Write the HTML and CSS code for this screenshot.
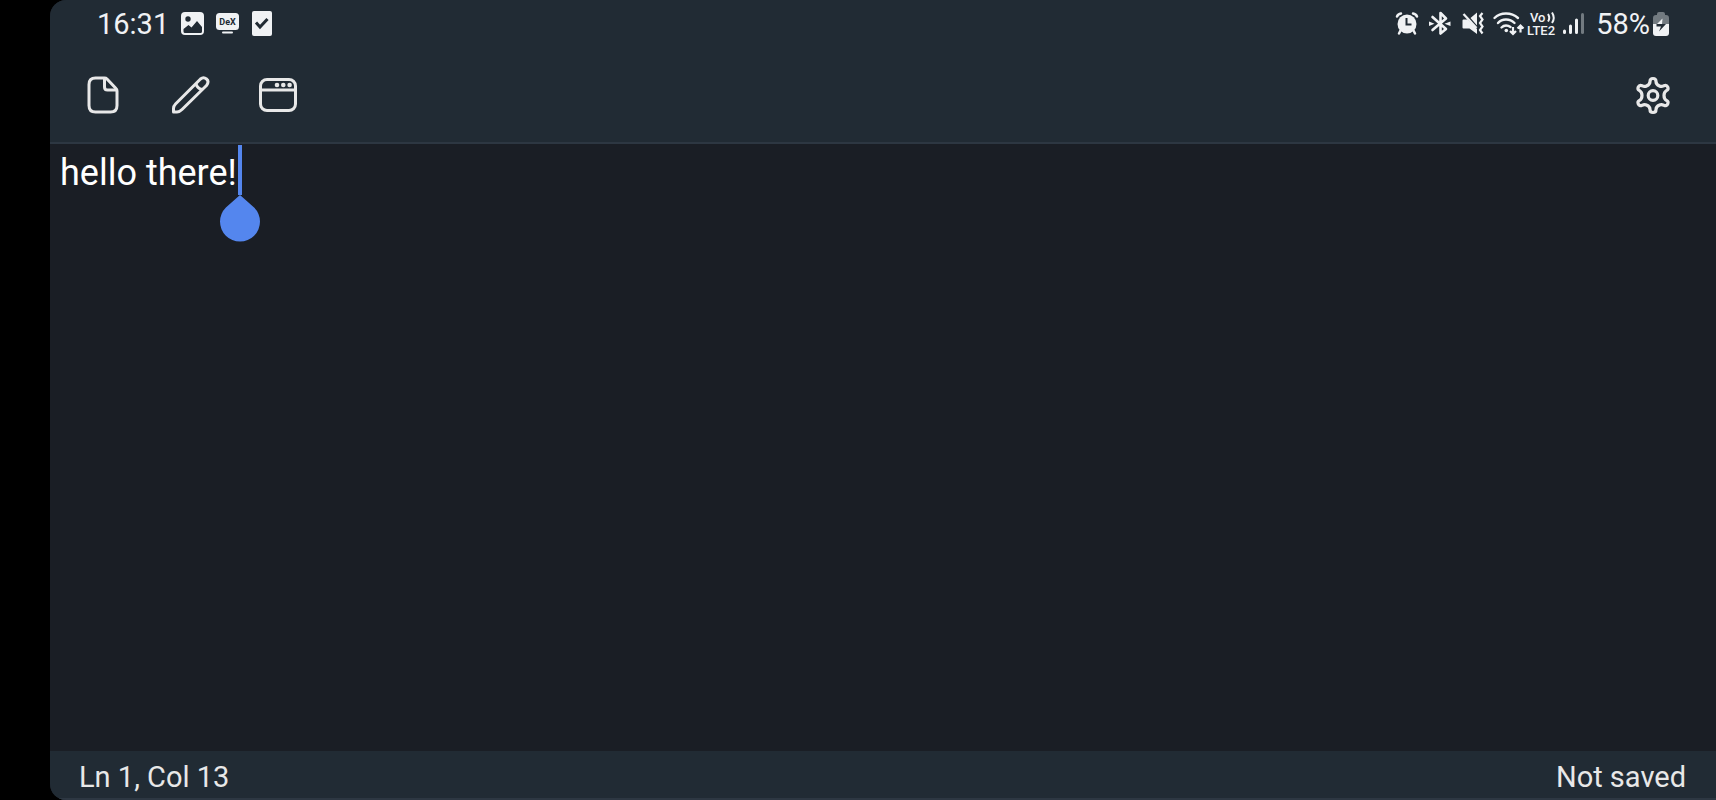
FILE: index.html
```
<!DOCTYPE html>
<html lang="en">
<head>
<meta charset="utf-8">
<title>Text editor</title>
<link rel="stylesheet" href="styles.css">
</head>
<body>
<div class="app">
  <header class="top">
    <div class="status">
      <div class="status-left">
        <time class="clock">16:31</time>
        <svg class="icon" width="24" height="26" viewBox="0 0 24 26" aria-hidden="true">
          <rect x="0" y="1" width="23" height="23" rx="4" fill="#f0f2f4"/>
          <circle cx="7" cy="8" r="2.7" fill="#212b34"/>
          <path d="M2.500 20.500V18l5-4 3 2.500 5.500-6.500 5 6V20.500q0 1.500-1.500 1.500H4q-1.500 0-1.500-1.500Z" fill="#212b34"/>
        </svg>
        <svg class="icon" width="24" height="26" viewBox="0 0 24 26" aria-hidden="true">
          <rect x="0" y="2" width="23" height="17" rx="3.500" fill="#f0f2f4"/>
          <path d="M7 21.500h9" stroke="#f0f2f4" stroke-width="2" stroke-linecap="round"/>
          <text class="dex" x="11.500" y="14" text-anchor="middle">DeX</text>
        </svg>
        <svg class="icon" width="21" height="26" viewBox="0 0 21 26" aria-hidden="true">
          <rect x="1" y="0" width="20" height="25" rx="2" fill="#f0f2f4"/>
          <path d="M5 11.500l4 4.500 7.500-8" fill="none" stroke="#212b34" stroke-width="3"/>
        </svg>
      </div>
      <div class="status-right">
        <svg class="icon" width="22" height="26" viewBox="0 0 22 26" aria-hidden="true">
          <circle cx="11" cy="13" r="9.500" fill="#f0f2f4"/>
          <path d="M1 5.500Q2 3 5 2.500M21 5.500Q20 3 17 2.500M4.500 19.500L3 22.500M17.500 19.500L19 22.500" fill="none" stroke="#f0f2f4" stroke-width="2.500" stroke-linecap="round"/>
          <path d="M10.500 7v6.500h5" fill="none" stroke="#212b34" stroke-width="2"/>
        </svg>
        <svg class="icon" width="22" height="26" viewBox="0 0 22 26" aria-hidden="true">
          <path d="M3.500 6L17 18 11.500 22.500V2L17 7.500 3.500 19" fill="none" stroke="#f0f2f4" stroke-width="2.600" stroke-linejoin="round" stroke-linecap="round"/>
          <path d="M0 10.500L5.500 12.700 0 15ZM21.500 10.500L15.500 12.700 21.500 15Z" fill="#f0f2f4"/>
        </svg>
        <svg class="icon" width="22" height="26" viewBox="0 0 22 26" aria-hidden="true">
          <path d="M1.500 8.500h4L15 18v5L7.500 17.500H1.500Q.5 17.500 .5 16.500V9.500Q.5 8.500 1.500 8.500ZM15 1.500v13L8.500 7Z" fill="#f0f2f4"/>
          <path d="M1.500 3L14.500 17" stroke="#f0f2f4" stroke-width="2.300"/>
          <path d="M20.500 2l-2.500 3 2.500 3.500-2.500 3.500 2.500 3.500-2.500 3.500 2.500 3.500" fill="none" stroke="#f0f2f4" stroke-width="2.200"/>
        </svg>
        <svg class="icon wifi" width="32" height="26" viewBox="0 0 32 26" aria-hidden="true">
          <g fill="none" stroke="#f0f2f4" stroke-width="2.400" stroke-linecap="round">
            <path d="M1.500 7Q6 2.500 13 2.500T25 7"/>
            <path d="M5 12Q8 8.500 13 8.500T21.500 12"/>
            <path d="M8.500 16.500Q10.500 14.500 13 14.500T17.500 16"/>
          </g>
          <circle cx="13.300" cy="19.500" r="1.800" fill="#f0f2f4"/>
          <path d="M20 16v7M17 20l3 3 3-3M27.500 21.500v-7M24.500 17.500l3-3 3 3" fill="none" stroke="#f0f2f4" stroke-width="2.200"/>
        </svg>
        <svg class="icon lte" width="31" height="26" viewBox="0 0 31 26" role="img" aria-label="VoLTE 2">
          <text class="net" x="3" y="11">Vo</text>
          <path d="M21 3Q23.500 7 21 10.500M25 1.500Q28.500 7 25 12" fill="none" stroke="#f0f2f4" stroke-width="2"/>
          <text class="net" x="0" y="24">LTE2</text>
        </svg>
        <svg class="icon" width="22" height="26" viewBox="0 0 22 26" aria-hidden="true">
          <g fill="none" stroke="#f0f2f4" stroke-width="3" stroke-linecap="round">
            <path d="M1.500 20v1.500M7.500 15v6.500M13.500 9v12.500"/>
            <path d="M19.500 3.500v18" stroke="#727a80"/>
          </g>
        </svg>
        <span class="percent">58%</span>
        <svg class="icon" width="16" height="26" viewBox="0 0 16 26" aria-hidden="true">
          <path d="M4 4V3Q4 1 6 1h4q2 0 2 2v1h1q3 0 3 3v6H0V7q0-3 3-3Z" fill="#727a80"/>
          <path d="M0 13h16v9q0 3-3 3H3q-3 0-3-3Z" fill="#f0f2f4"/>
          <path d="M9.500 7.500L4 13h5Z" fill="#f0f2f4"/>
          <path d="M3.500 13H13L6 20.500 8 15.500H3.500Z" fill="#212b34"/>
        </svg>
      </div>
    </div>
    <nav class="toolbar" aria-label="Main">
      <button class="tool" type="button" aria-label="File">
        <svg width="40" height="40" viewBox="0 0 40 40" fill="none" stroke="#e8e8e8" stroke-width="3" stroke-linejoin="round">
          <path d="M12.500 3H21.500Q23 3 24 4L33 13.500Q34 14.500 34 16V30.500q0 6.500-6.500 6.500H12.500q-6.500 0-6.500-6.500V9.500q0-6.500 6.500-6.500Z"/>
          <path d="M21.500 3.500v8.500q0 3 3 3H33.500"/>
        </svg>
      </button>
      <button class="tool" type="button" aria-label="Edit">
        <svg width="40" height="40" viewBox="0 0 40 40" fill="none" stroke="#e8e8e8" stroke-width="3" stroke-linejoin="round">
          <path d="M2.500 37V33.500q0-2.500 2-4.500L29.500 4q3-2.500 6 0t0 6.500L11 34.500q-2.500 2.500-5 2.500Z"/>
          <path d="M25 9q1.500 4.500 6 5.500"/>
        </svg>
      </button>
      <button class="tool" type="button" aria-label="Window">
        <svg width="40" height="40" viewBox="0 0 40 40" fill="none" stroke="#e8e8e8" stroke-width="3">
          <rect x="1.500" y="4.500" width="35" height="31" rx="6.500"/>
          <path d="M1.500 15h35"/>
          <g fill="#e8e8e8" stroke="none"><circle cx="18" cy="10" r="2.300"/><circle cx="24.300" cy="10" r="2.300"/><circle cx="30.600" cy="10" r="2.300"/></g>
        </svg>
      </button>
      <button class="tool settings" type="button" aria-label="Settings">
        <svg width="40" height="40" viewBox="0 0 40 40" fill="none" stroke="#e8e8e8" stroke-width="3.200" stroke-linejoin="round">
          <path d="M17 6.500Q17 3.500 20 3.500T23 6.500Q23 9.500 26.500 11 28.500 12 31 10.700 33.500 9.500 34.700 12T33.500 15.500Q31 17 31 20.500T33.500 25.500Q35.900 26.500 34.700 29T31 30.300Q28.500 29 26.500 30 23 31.500 23 34.500 23 37.500 20 37.500T17 34.500Q17 31.500 13.500 30 11.500 29 9 30.300 6.500 31.500 5.300 29T6.500 25.500Q9 24 9 20.500T6.500 15.500Q4.100 14.500 5.300 12T9 10.700Q11.500 12 13.500 11 17 9.500 17 6.500Z"/>
          <circle cx="20" cy="20.500" r="4.800"/>
        </svg>
      </button>
    </nav>
  </header>
  <main class="editor">
    <textarea class="text" aria-label="Document text" spellcheck="false">hello there!</textarea>
    <svg class="cursor" width="40" height="98" viewBox="0 0 40 98" aria-hidden="true">
      <path d="M18 0h4v50h-4ZM20 50L34.100 62.400A20 20 0 1 1 5.900 62.400Z" fill="#5486ee"/>
    </svg>
  </main>
  <footer class="footer">
    <span>Ln 1, Col 13</span>
    <span>Not saved</span>
  </footer>
</div>
</body>
</html>
```
FILE: styles.css
```
* {
  box-sizing: border-box;
}

body {
  margin: 0;
  padding-left: 50px;
  background: #000;
  color: #e8e8e8;
  font-family: Roboto, "Liberation Sans", sans-serif;
  font-size: 29px;
}

.app {
  display: flex;
  flex-direction: column;
  min-height: 100vh;
  overflow: hidden;
  border-radius: 16px 0 0 16px;
  background: #1a1e25;
}

.top {
  background: #212b34;
  border-bottom: 2px solid #2d3742;
}

.status {
  display: flex;
  justify-content: space-between;
  height: 48px;
  padding: 0 47px;
  align-items: center;
  color: #f0f2f4;
}

.status-left,
.status-right {
  display: flex;
  align-items: center;
  gap: 11px;
}

.clock {
  margin-right: 1px;
}

.icon {
  display: block;
  overflow: visible;
}

.wifi {
  margin-left: -2px;
}

.lte {
  margin-left: -9px;
  margin-right: -6px;
}

.percent {
  margin-right: -8px;
}

.dex {
  font-size: 9px;
  font-weight: 700;
  fill: #212b34;
}

.net {
  font-size: 13px;
  font-weight: 500;
  fill: #f0f2f4;
}

.toolbar {
  display: flex;
  align-items: center;
  gap: 48px;
  height: 94px;
  padding: 0 43px 0 33px;
}

.tool {
  display: block;
  width: 40px;
  height: 40px;
  padding: 0;
  border: 0;
  background: none;
}

.tool svg {
  display: block;
}

.settings {
  margin-left: auto;
}

.editor {
  position: relative;
  display: flex;
  flex: 1;
}

.text {
  flex: 1;
  padding: 3px 10px;
  border: 0;
  outline: 0;
  resize: none;
  background: transparent;
  color: #fff;
  font-family: inherit;
  font-size: 36px;
  line-height: 52px;
}

.cursor {
  position: absolute;
  top: 1px;
  left: 170px;
}

.footer {
  display: flex;
  justify-content: space-between;
  padding: 7px 30px 2px 29px;
  background: #212b34;
  border-bottom: 2px solid #2d3742;
  line-height: 38px;
}
```
